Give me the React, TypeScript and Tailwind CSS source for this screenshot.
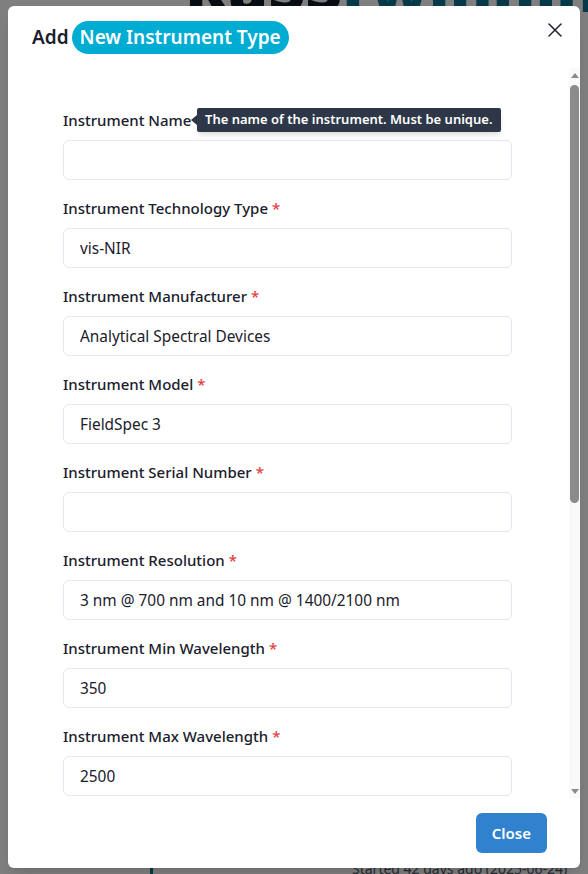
import { X } from 'lucide-react';

const fields = [
  { label: 'Instrument Name', value: '', tip: 'The name of the instrument. Must be unique.' },
  { label: 'Instrument Technology Type', value: 'vis-NIR' },
  { label: 'Instrument Manufacturer', value: 'Analytical Spectral Devices' },
  { label: 'Instrument Model', value: 'FieldSpec 3' },
  { label: 'Instrument Serial Number', value: '' },
  { label: 'Instrument Resolution', value: '3 nm @ 700 nm and 10 nm @ 1400/2100 nm' },
  { label: 'Instrument Min Wavelength', value: '350' },
  { label: 'Instrument Max Wavelength', value: '2500' },
  { label: 'Instrument Sampling Interval', value: '1' },
  { label: 'Instrument Detector Type', value: '' },
  { label: 'Instrument Light Source', value: '' },
  { label: 'Instrument Number of Detectors', value: '' },
  { label: 'Instrument Notes', value: '' },
];

function Field({ label, value, tip }: { label: string; value: string; tip?: string }) {
  return (
    <div className="flex flex-col">
      <div className="relative flex items-center h-6 mb-2">
        <label className="text-[15px] font-medium text-[#1a202c] leading-6">
          {label}
          <span className="ml-1 text-[#e53e3e]">*</span>
        </label>
        {tip && (
          <div className="absolute left-[128px] top-0 h-6 flex items-center">
            <span className="w-0 h-0 border-y-[5px] border-y-transparent border-r-[6px] border-r-[#2d3748]" />
            <span className="h-6 px-2 flex items-center bg-[#2d3748] text-white text-[13px] font-semibold rounded-[2px] shadow-md whitespace-nowrap">
              {tip}
            </span>
          </div>
        )}
      </div>
      <input
        readOnly
        value={value}
        className="h-10 w-full px-4 rounded-md border border-[#e2e8f0] text-[15.4px] text-[#1a202c] outline-none bg-white"
      />
    </div>
  );
}

// the browser hides its own scrollbars when photographing, so draw one
function Scrollbar() {
  return (
    <div className="w-[11px] shrink-0 flex flex-col bg-[#f9f9f9]">
      <div className="h-[14px] flex items-center justify-center">
        <span className="w-0 h-0 border-x-[4px] border-x-transparent border-b-[5px] border-b-[#8b8b8b]" />
      </div>
      <div className="flex-1 px-[1px] pt-[3px]">
        <div className="h-[418px] rounded-full bg-[#8b8b8b]" />
      </div>
      <div className="h-[14px] flex items-center justify-center">
        <span className="w-0 h-0 border-x-[4px] border-x-transparent border-t-[5px] border-t-[#8b8b8b]" />
      </div>
    </div>
  );
}

export default function App() {
  return (
    <div className="relative h-[874px] w-full overflow-hidden bg-white font-['Noto_Sans',sans-serif]">
      {/* Page behind the modal */}
      <div className="flex flex-col h-full">
        <div className="flex -mt-[44px] text-[64px] font-black leading-none">
          <span className="text-[#111827] ml-[185px]">RaSS</span>
          <span className="text-[#0e7490] ml-[-8px]">Twinning</span>
        </div>
        <div className="flex justify-between mt-[36px] text-[15px]">
          <div className="flex flex-col -ml-[60px]">
            <span className="font-bold text-[#1a202c]">Spectro</span>
            <span className="text-[#4a5568]">Archive</span>
          </div>
          <div className="flex flex-col -mr-[30px]">
            <span className="font-bold text-[#1a202c]">Proj</span>
            <span className="text-[#c05621]">ist</span>
          </div>
        </div>
        <div className="mt-auto flex items-end h-[12px]">
          <span className="ml-[150px] w-[3px] h-[12px] bg-[#0e7490]" />
          <span className="ml-[199px] text-[14px] text-[#4a5568] leading-none -mb-[2px]">Started 42 days ago (2025-06-24)</span>
        </div>
      </div>

      {/* Overlay */}
      <div className="absolute inset-0 bg-black/50" />

      {/* Modal */}
      <div className="absolute inset-0 flex justify-center">
        <div className="mt-[6px] mx-2 w-full h-[862px] bg-white rounded-md shadow-lg flex flex-col relative">
          <div className="flex items-center px-6 h-[62px] gap-[3px] text-[19px] font-semibold text-[#1a202c]">
            <span>Add</span>
            <span className="bg-[#00acd2] text-white rounded-full px-2 h-[33px] flex items-center">New Instrument Type</span>
          </div>
          <button className="absolute top-[12px] right-[13px] w-6 h-6 flex items-center justify-center text-[#1a202c]">
            <X size={24} strokeWidth={1.5} />
          </button>

          <div className="flex-1 min-h-0 flex">
            <div className="flex-1 min-w-0 overflow-y-auto">
              <div className="flex flex-col gap-4 pl-[55px] pr-[57px] pt-10 pb-10">
                {fields.map((f) => (
                  <Field key={f.label} label={f.label} value={f.value} tip={f.tip} />
                ))}
              </div>
            </div>
            <Scrollbar />
          </div>

          <div className="flex justify-end items-center h-[70px] pr-[33px]">
            <button className="h-10 px-4 rounded-md bg-[#3182ce] text-white text-[15px] font-semibold">Close</button>
          </div>
        </div>
      </div>
    </div>
  );
}
